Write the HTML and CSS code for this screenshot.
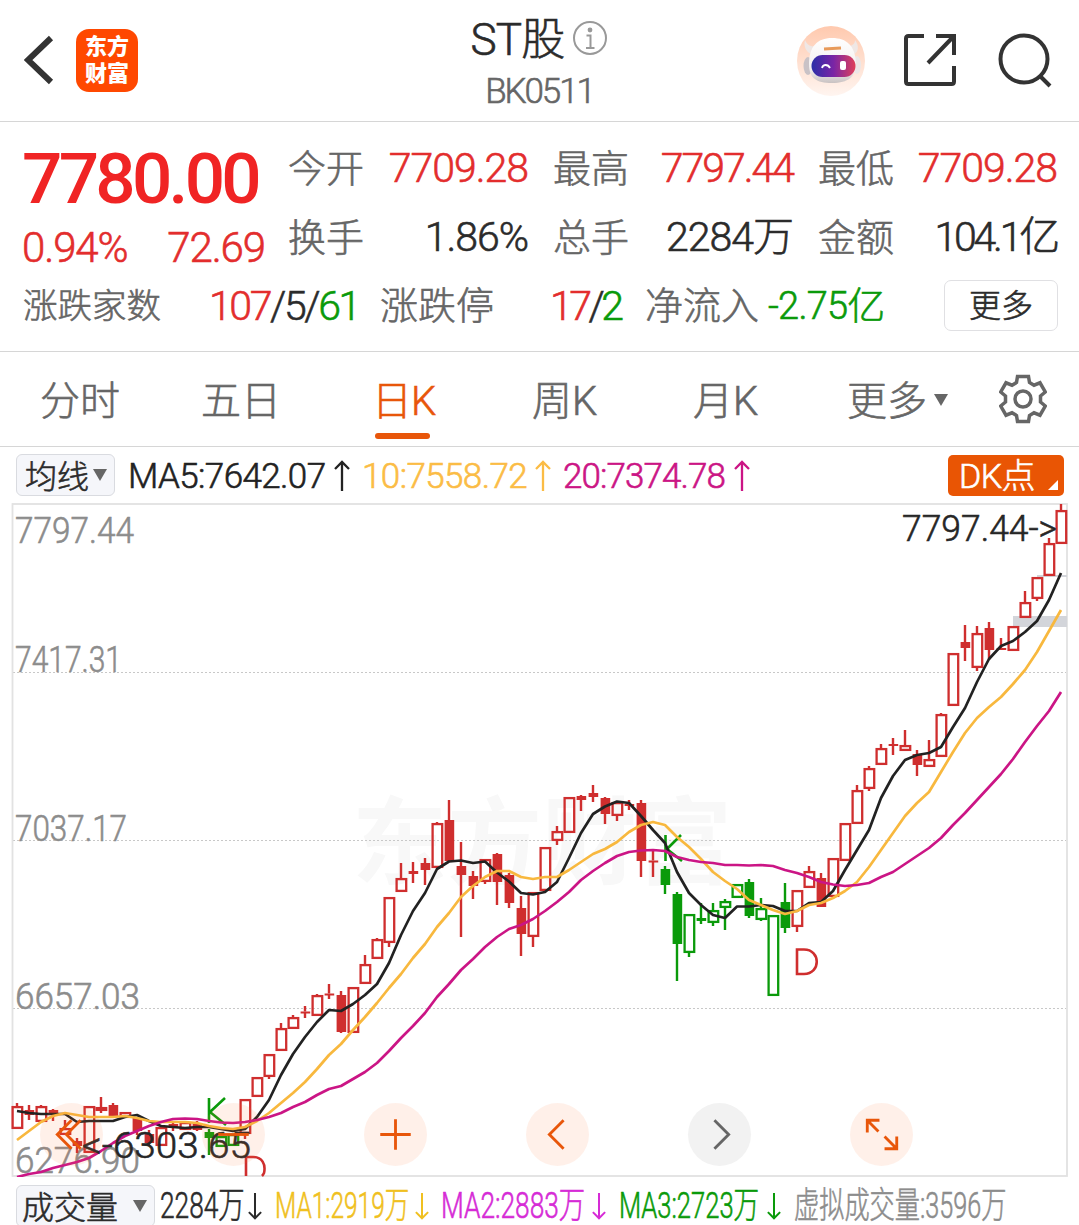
FILE: index.html
```html
<!DOCTYPE html>
<html lang="zh-CN">
<head>
  <meta charset="UTF-8" />
  <meta name="viewport" content="width=device-width, initial-scale=1.0"/>
  <title>ST股 BK0511</title>
  <link rel="stylesheet" href="styles.css">
</head>
<body>

  <header class="topbar">
    <div class="topbar-left">
      <svg class="back" viewBox="0 0 32 52"><path d="M27 4L4 26l23 22"/></svg>
      <div class="logo"><span>东方</span><span>财富</span></div>
    </div>
    <div class="topbar-title">
      <h1>ST股
        <svg class="info" viewBox="0 0 36 36"><circle cx="18" cy="18" r="16"/><circle class="dot" cx="18" cy="10" r="2.4"/><path d="M14.500 15.500h4v12M14 28h8.500"/></svg>
      </h1>
      <p>BK0511</p>
    </div>
    <div class="topbar-right">
      <svg class="robot" viewBox="0 0 68 70">
        <defs>
          <linearGradient id="peach" x1="0" y1="0" x2="0" y2="1"><stop offset="0" stop-color="#ffc9ae"/><stop offset="1" stop-color="#fff5f0"/></linearGradient>
          <linearGradient id="visor"><stop offset="0" stop-color="#2b2fa8"/><stop offset=".5" stop-color="#7a25a5"/><stop offset="1" stop-color="#e0405a"/></linearGradient>
          <linearGradient id="shell" x1="0" y1="0" x2="0" y2="1"><stop offset="0" stop-color="#fff"/><stop offset=".7" stop-color="#f3efef"/><stop offset="1" stop-color="#c9c2c2"/></linearGradient>
        </defs>
        <ellipse cx="34" cy="35" rx="34" ry="35" fill="url(#peach)"/>
        <path d="M8 14c-2 7 2 13 7 14l5-7c-6 0-10-2-12-7zM58 14c4 5 4 12-1 14l-6-8c4 0 7-2 7-6z" fill="#efe7e5"/>
        <ellipse cx="11" cy="40" rx="4.500" ry="9" fill="#c9c2c6"/>
        <ellipse cx="60" cy="39" rx="4" ry="9" fill="#ece6e6"/>
        <path d="M35 12c15 0 23 8 24 25 0 14-8 20-24 20s-23-5-23-19c0-17 8-26 23-26z" fill="url(#shell)"/>
        <rect x="14.500" y="29" width="44" height="22" rx="11" fill="url(#visor)"/>
        <path d="M27 23l17-1" stroke="#e89a5a" stroke-width="3"/>
        <path d="M25 42c1-4 6-4 8 0" fill="none" stroke="#fff" stroke-width="1.800"/>
        <rect x="43" y="35" width="6" height="9" rx="2" fill="#fff"/>
      </svg>
      <svg class="share" viewBox="0 0 56 56"><path d="M22 4H6.500Q4 4 4 6.500V49.500Q4 52 6.500 52H49.500Q52 52 52 49.500V34M34 4H52V23M52 4L26 31"/></svg>
      <svg class="search" viewBox="0 0 56 56"><circle cx="26" cy="26" r="23.500"/><path d="M42 43L52 53"/></svg>
    </div>
  </header>

  <section class="quote">
    <div class="quote-main">
      <div class="price-box">
        <div class="price">7780.00</div>
        <div class="change"><span>0.94%</span><span>72.69</span></div>
      </div>
      <dl class="stats">
        <div><dt>今开</dt><dd class="up">7709.28</dd></div>
        <div><dt>最高</dt><dd class="up tight">7797.44</dd></div>
        <div><dt>最低</dt><dd class="up">7709.28</dd></div>
        <div><dt>换手</dt><dd>1.86%</dd></div>
        <div><dt>总手</dt><dd>2284万</dd></div>
        <div><dt>金额</dt><dd class="tighter">104.1亿</dd></div>
      </dl>
    </div>
    <div class="quote-extra">
      <span class="label count">涨跌家数</span>
      <span class="value count-value"><b class="up">107</b>/5/<b class="down">61</b></span>
      <span class="label">涨跌停</span>
      <span class="value limit-value"><b class="up">17</b>/<b class="down">2</b></span>
      <span class="label">净流入</span>
      <span class="value flow down">-2.75亿</span>
      <button class="more">更多</button>
    </div>
  </section>

  <nav class="tabs">
    <a>分时</a>
    <a>五日</a>
    <a class="active">日K</a>
    <a>周K</a>
    <a>月K</a>
    <a>更多<i class="caret"></i></a>
    <svg class="gear" viewBox="0 0 48 50"><path d="M18.500 2.500H29.500L30.500 8.500L35 11.200L41 8.800L46.300 18L41.500 22V28L46.300 32L41 41.200L35 38.800L30.500 41.500L29.500 47.500H18.500L17.500 41.500L13 38.800L7 41.200L1.700 32L6.500 28V22L1.700 18L7 8.800L13 11.200L17.500 8.500Z"/><circle cx="24" cy="25" r="8"/></svg>
  </nav>

  <div class="ma-row">
    <div class="picker">均线<i class="caret"></i></div>
    <span class="ma5">MA5:7642.07</span><svg class="arrow ma5" viewBox="0 0 16 32"><path d="M8 31V2M1 9l7-7 7 7"/></svg>
    <span class="ma10">10:7558.72</span><svg class="arrow ma10" viewBox="0 0 16 32"><path d="M8 31V2M1 9l7-7 7 7"/></svg>
    <span class="ma20">20:7374.78</span><svg class="arrow ma20" viewBox="0 0 16 32"><path d="M8 31V2M1 9l7-7 7 7"/></svg>
    <div class="dk">DK点</div>
  </div>

  <main class="chart">
    <svg id="kline" viewBox="0 503 1079 674" width="1079" height="674"></svg>
    <div class="tools">
      <button><svg viewBox="0 0 62 62"><path d="M31 17L17 31l14 14M40 17L26 31l14 14"/></svg></button>
      <button><svg viewBox="0 0 62 62"><path d="M16 31h30"/></svg></button>
      <button><svg viewBox="0 0 62 62"><path d="M16 31h30M31 16v30"/></svg></button>
      <button><svg viewBox="0 0 62 62"><path d="M37 17L23 31l14 14"/></svg></button>
      <button class="off"><svg viewBox="0 0 62 62"><path d="M26 17l14 14-14 14"/></svg></button>
      <button><svg viewBox="0 0 62 62"><path d="M17 29V17H29M17 17l11 11M46 33V45H34M46 45L34 33"/></svg></button>
    </div>
  </main>

  <div class="vol-row">
    <div class="picker">成交量<i class="caret"></i></div>
    <div class="vol v0"><span>2284万</span><svg class="arrow" viewBox="0 0 16 32"><path d="M8 1v29M1 23l7 7 7-7"/></svg></div>
    <div class="vol v1"><span>MA1:2919万</span><svg class="arrow" viewBox="0 0 16 32"><path d="M8 1v29M1 23l7 7 7-7"/></svg></div>
    <div class="vol v2"><span>MA2:2883万</span><svg class="arrow" viewBox="0 0 16 32"><path d="M8 1v29M1 23l7 7 7-7"/></svg></div>
    <div class="vol v3"><span>MA3:2723万</span><svg class="arrow" viewBox="0 0 16 32"><path d="M8 1v29M1 23l7 7 7-7"/></svg></div>
    <div class="vol v4"><span>虚拟成交量:3596万</span></div>
  </div>

  <script src="chart.js"></script>
</body>
</html>
```
FILE: styles.css
```css
* {
  margin: 0;
  padding: 0;
  box-sizing: border-box;
}

body {
  width: 1079px;
  height: 1225px;
  overflow: hidden;
  background-color: #ffffff;
  color: #2b2b2b;
  font-family: Roboto, "Noto Sans CJK SC", sans-serif;
  font-weight: 300;
  line-height: 1.2;
  -webkit-text-stroke: 0.6px currentColor;
}

svg {
  display: block;
  fill: none;
}

button {
  font: inherit;
  color: inherit;
  border: none;
}

.up { color: #e32d2d; }
.down { color: #0a9a0a; }

/* top bar */
.topbar {
  height: 122px;
  border-bottom: 1px solid #d6d6d6;
  display: grid;
  grid-template-columns: 1fr 300px 1fr;
}

.topbar-left {
  display: flex;
  align-items: flex-start;
  padding: 29px 0 0 24px;
}

.back {
  width: 32px;
  height: 52px;
  margin: 5px 20px 0 0;
  stroke: #333333;
  stroke-width: 6;
}

.logo {
  width: 62px;
  height: 63px;
  padding-top: 4px;
  border-radius: 13px;
  background-color: #ff4800;
  color: #ffffff;
  font-size: 22px;
  font-weight: 900;
  line-height: 27px;
  -webkit-text-stroke: 0;
  display: flex;
  flex-direction: column;
  align-items: center;
}

.topbar-title {
  padding-top: 13px;
  text-align: center;
}

.topbar-title h1 {
  display: flex;
  justify-content: center;
  align-items: center;
  gap: 8px;
  height: 54px;
  font-size: 44px;
  font-weight: 300;
  letter-spacing: -0.8px;
}

.topbar-title p {
  height: 50px;
  line-height: 50px;
  font-size: 35px;
  letter-spacing: -2.1px;
  color: #666666;
}

.info {
  width: 36px;
  height: 36px;
  margin-top: -5px;
  stroke: #999999;
  stroke-width: 2;
}

.info .dot {
  fill: #999999;
  stroke: none;
}

.topbar-right {
  display: flex;
  justify-content: flex-end;
  padding: 26px 25px 0 0;
}

.robot {
  width: 68px;
  height: 70px;
}

.share {
  width: 56px;
  height: 56px;
  margin: 6px 40px 0 37px;
  stroke: #333333;
  stroke-width: 4;
}

.search {
  width: 56px;
  height: 56px;
  margin-top: 7px;
  stroke: #333333;
  stroke-width: 4;
}

/* quote */
.quote {
  height: 230px;
  border-bottom: 1px solid #d6d6d6;
}

.quote-main {
  display: flex;
  height: 150px;
}

.price-box {
  width: 288px;
  padding: 17px 23px 0 22px;
  color: #e32d2d;
}

.price {
  height: 80px;
  line-height: 80px;
  color: #f02424;
  font-size: 71px;
  font-weight: 500;
  letter-spacing: -3.7px;
  -webkit-text-stroke: 0;
}

.change {
  display: flex;
  justify-content: space-between;
  line-height: 58px;
  font-size: 42px;
  letter-spacing: -1.1px;
}

.stats {
  flex: 1;
  display: grid;
  grid-template-columns: 240px 240px 239px;
  grid-template-rows: 69px 69px;
  column-gap: 25px;
  padding-top: 12px;
}

.stats div {
  display: flex;
  justify-content: space-between;
  align-items: center;
}

.stats dt,
.label {
  font-size: 38px;
  color: #666666;
  padding-top: 2px;
}

.stats dd,
.value {
  font-size: 41px;
  letter-spacing: -1px;
}

.stats .tight { letter-spacing: -2px; }
.stats .tighter { letter-spacing: -3.2px; }

.quote-extra {
  display: flex;
  align-items: center;
  height: 66px;
  padding-left: 23px;
}

.quote-extra b {
  font-weight: inherit;
}

.quote-extra .value {
  padding-top: 3px;
}

.quote-extra .label {
  padding-top: 4px;
}

.quote-extra .count {
  width: 186px;
  font-size: 34.500px;
}

.quote-extra .count-value {
  width: 171px;
  letter-spacing: -2.4px;
}

.quote-extra .limit-value {
  width: 95px;
  margin-left: 56px;
  letter-spacing: -3.5px;
}

.quote-extra .flow {
  width: 176px;
  margin-left: 9px;
  font-size: 38px;
  letter-spacing: -0.8px;
}

.more {
  flex: none;
  width: 114px;
  height: 51px;
  padding-top: 2px;
  border: 1.500px solid #e0e0e3;
  border-radius: 7px;
  background-color: #ffffff;
  font-size: 32px;
}

/* tabs */
.tabs {
  height: 95px;
  border-bottom: 1px solid #d6d6d6;
  display: grid;
  grid-template-columns: 161px 171px 160px 161px 154px 192px 1fr;
  align-items: center;
  padding-left: 40px;
  font-size: 40px;
  color: #666666;
}

.tabs a {
  height: 94px;
  line-height: 99px;
}

.tabs .active {
  color: #e8560a;
  position: relative;
  letter-spacing: -1px;
}

.tabs .active::after {
  content: "";
  position: absolute;
  left: 3px;
  bottom: 7px;
  width: 55px;
  height: 6px;
  border-radius: 3px;
  background-color: #e8560a;
}

.caret {
  display: inline-block;
  border: 7px solid transparent;
  border-top: 12px solid #666666;
  border-bottom: none;
  vertical-align: 9px;
  margin-left: 7px;
}

.gear {
  width: 48px;
  height: 50px;
  margin-left: -40px;
  stroke: #666666;
  stroke-width: 3.500;
}

/* moving averages */
.ma-row {
  height: 56px;
  display: flex;
  align-items: center;
  padding-left: 16px;
  font-size: 35px;
  letter-spacing: -0.6px;
}

.ma-row span {
  padding-top: 4px;
}

.picker {
  height: 42px;
  border: 1px solid #d9dbe0;
  border-radius: 6px;
  background-color: #f5f6fa;
  line-height: 44px;
  font-size: 32px;
  letter-spacing: 0;
  padding-left: 8px;
  white-space: nowrap;
}

.picker .caret {
  vertical-align: 7px;
}

.ma-row .picker {
  width: 99px;
  margin-right: 13px;
}

.ma-row .caret {
  margin-left: 4px;
}

.ma5 { color: #222222; width: 206px; }
.ma10 { color: #fbbc45; width: 173px; }
.ma20 { color: #cb1585; width: 171px; }

.ma-row span.ma20 {
  letter-spacing: -0.9px;
}

.arrow {
  flex: none;
  width: 16px;
  height: 32px;
  stroke: currentColor;
  stroke-width: 2.300;
}

.ma-row .arrow {
  width: 16px;
  margin-top: 2px;
  margin-right: 12px;
}

.dk {
  position: relative;
  width: 116px;
  height: 41px;
  margin-left: auto;
  margin-right: 15px;
  padding-left: 11px;
  border-radius: 5px;
  background-color: #e95504;
  color: #ffffff;
  font-size: 34px;
  line-height: 43px;
}

.dk::after {
  content: "";
  position: absolute;
  right: 6px;
  bottom: 6px;
  border-left: 10px solid transparent;
  border-bottom: 10px solid #ffffff;
}

/* chart */
.chart {
  position: relative;
  height: 674px;
}

.chart text {
  font-size: 37px;
  stroke-width: 0.6px;
}

.chart .watermark {
  font-size: 95px;
  font-weight: 700;
  fill: #f8f8f8;
  -webkit-text-stroke: 0;
}

.chart .axis { fill: #8c8c8c; stroke: #8c8c8c; }
.chart .mark { fill: #262626; stroke: #262626; }

.tools {
  position: absolute;
  left: 40px;
  top: 600px;
  display: flex;
  gap: 99px;
}

.tools button {
  width: 63px;
  height: 63px;
  border-radius: 50%;
  background-color: rgba(255, 122, 51, 0.11);
}

.tools svg {
  stroke: #e8560a;
  stroke-width: 2.800;
}

.tools .off { background-color: #f2f2f2; }
.tools .off svg { stroke: #666666; }

/* volume */
.vol-row {
  display: flex;
  align-items: flex-start;
  padding: 8px 0 0 16px;
  height: 48px;
}

.vol-row .picker {
  width: 139px;
  margin-right: 5px;
  padding-left: 5px;
}

.vol-row .caret {
  margin-left: 15px;
}

.vol {
  display: flex;
  flex: none;
  align-items: center;
  height: 40px;
  font-size: 36px;
  line-height: 38px;
  white-space: nowrap;
}

.vol span {
  flex: none;
  padding-top: 2px;
  transform: scaleX(0.7);
  transform-origin: left;
}

.vol-row .arrow {
  width: 14px;
  margin-top: 2px;
}

.v0 { width: 115px; }
.v0 span { width: 88px; transform: scaleX(0.73); }
.v1 { width: 166px; color: #f0c020; }
.v1 span { width: 140px; transform: scaleX(0.68); }
.v2 { width: 178px; color: #d62bd6; }
.v2 span { width: 151px; transform: scaleX(0.73); }
.v3 { width: 175px; color: #0a9a0a; }
.v3 span { width: 148px; transform: scaleX(0.71); }
.v4 { width: 220px; color: #8c8c8c; }
```
FILE: chart.js
```javascript
const RED = "#cf2e2e";
const GREEN = "#0a9a0a";
const STEP = 12;
const LEFT = 17;

// [type, high, top, bottom, low]  h = hollow, s = solid, g prefix = green
const candles = [
  ["h", 1103, 1106, 1129, 1129], ["s", 1105, 1110, 1115, 1120], ["h", 1105, 1106, 1122, 1122], ["s", 1109, 1110, 1113, 1121],
  ["h", 1120, 1128, 1135, 1135], ["s", 1138, 1141, 1146, 1153], ["h", 1106, 1106, 1153, 1153], ["h", 1097, 1107, 1111, 1113],
  ["s", 1103, 1105, 1116, 1116], ["h", 1112, 1112, 1118, 1118], ["s", 1118, 1118, 1131, 1135], ["s", 1130, 1134, 1143, 1146],
  ["h", 1127, 1127, 1146, 1146], ["s", 1122, 1124, 1128, 1131], ["h", 1122, 1122, 1130, 1130], ["s", 1121, 1123, 1130, 1131],
  ["gs", 1129, 1132, 1138, 1155], ["gh", 1136, 1136, 1147, 1147], ["gh", 1134, 1134, 1146, 1146], ["h", 1099, 1099, 1134, 1139],
  ["h", 1077, 1077, 1097, 1097], ["h", 1054, 1054, 1077, 1079], ["h", 1023, 1028, 1051, 1051], ["h", 1015, 1017, 1029, 1029],
  ["s", 1006, 1011.5, 1013, 1018], ["h", 994, 995, 1016, 1016], ["s", 984, 993.5, 995, 999], ["s", 991, 995, 1032, 1033],
  ["h", 987, 987, 1033, 1033], ["h", 955, 964, 984, 984], ["h", 938, 939, 959, 959], ["h", 897, 897, 943, 947],
  ["h", 863, 878, 892, 892], ["s", 862, 871, 874, 883], ["s", 858, 863, 870, 885], ["h", 822, 823, 868, 868],
  ["s", 800, 820, 861, 861], ["s", 842, 866, 875, 937], ["s", 871, 876, 886, 899], ["h", 859, 859, 882, 884],
  ["s", 853, 854, 882, 905], ["s", 873, 875, 903, 908], ["s", 896, 908, 934, 956], ["h", 892, 892, 937, 947],
  ["h", 847, 847, 891, 891], ["h", 826, 831, 841, 845], ["h", 797, 797, 833, 833], ["s", 795, 796, 800, 811],
  ["s", 785, 793, 797, 802], ["s", 797, 798, 814, 824], ["h", 802, 802, 816, 821], ["s", 800, 804, 806, 810],
  ["s", 800, 803, 861, 877], ["s", 851, 860.5, 862, 877], ["gs", 866, 869, 885, 894], ["gs", 892, 894, 944, 981],
  ["gh", 914, 914, 953, 957], ["gs", 903, 918, 921, 924], ["gh", 903, 910, 923, 926], ["gh", 899, 901, 908, 930],
  ["gh", 884, 884, 898, 898], ["gs", 879, 882, 916, 918], ["gh", 898, 908, 920, 921], ["gh", 915, 915, 996, 996],
  ["gs", 883, 902, 928, 933], ["h", 890, 890, 927, 932], ["h", 866, 871, 888, 888], ["s", 873, 878, 907, 907],
  ["h", 858, 858, 897, 897], ["h", 823, 823, 861, 861], ["h", 785, 790, 824, 824], ["h", 766, 768, 789, 791],
  ["h", 744, 748, 765, 765], ["s", 738, 744, 746, 755], ["h", 730, 745, 751, 751], ["s", 750, 754, 765, 776],
  ["h", 740, 759, 767, 767], ["h", 713, 714, 757, 757], ["h", 653, 653, 706, 706], ["s", 625, 642, 648, 661],
  ["h", 626, 633, 668, 671], ["s", 622, 628, 650, 660], ["s", 638, 648, 650, 650], ["h", 626, 626, 651, 651],
  ["h", 591, 602, 618, 618], ["h", 577, 577, 599, 601], ["h", 538, 543, 576, 576], ["h", 504, 510, 544, 544]
];

const ma5 = [
  1111, 1113, 1114, 1114, 1114, 1122, 1121, 1121, 1121, 1117, 1115, 1121, 1126, 1127, 1128, 1127, 1127, 1129, 1131, 1129,
  1117, 1100, 1075, 1054, 1037, 1022, 1010, 1011, 1004, 995, 984, 963, 935, 911, 893, 869, 861.5, 860.5, 863, 861.5,
  872.5, 881.5, 893, 894.5, 892, 882, 858, 833, 814, 806.5, 801.5, 803, 816, 830, 843, 872, 893, 905, 915, 918,
  906.5, 906.5, 905, 906, 911, 911, 903, 902, 891, 870, 850, 830, 798, 776, 760, 755, 753, 747, 727, 708,
  682, 659, 646, 641, 632, 621, 600, 573
];

const ma10 = [
  1140, 1131, 1122, 1116, 1113, 1115, 1117, 1117, 1117, 1116, 1118, 1121, 1122, 1122, 1122, 1123, 1126, 1128, 1129, 1127,
  1121, 1113, 1103, 1093, 1082, 1069, 1055, 1044, 1030, 1017, 1003, 988, 974, 958, 944, 927, 913, 897, 886, 877,
  871, 871, 877, 879, 877, 877, 870, 862, 854, 849, 842, 832, 825, 822, 825, 837, 847, 859, 872, 881,
  889, 900, 905, 910, 914, 911, 905, 903, 898, 891, 882, 867, 850, 833, 816, 803, 792, 772, 752, 733,
  718, 707, 697, 684, 670, 652, 631, 610
];

const ma20 = [
  1177, 1174, 1172, 1168, 1165, 1162, 1158, 1151, 1143, 1136, 1131, 1126, 1122, 1119, 1118.5, 1119, 1121, 1122.5, 1123, 1122,
  1120, 1117, 1113, 1107, 1102, 1095, 1089, 1086, 1079, 1072, 1063, 1051, 1038, 1026, 1013, 997, 984, 970, 959, 947,
  937, 929, 925, 919, 911, 902, 892, 880, 871, 863, 856, 852, 850.5, 850, 851, 857, 860, 862, 863, 865,
  865, 865.5, 865, 866, 870, 873, 877, 882, 884.5, 886, 885, 883, 877, 872, 864, 856, 848, 838, 825, 813,
  800, 787, 774, 759, 742, 726, 711, 692
];

function drawCandle([type, high, top, bottom, low], i) {
  const color = type[0] === "g" ? GREEN : RED;
  const x = LEFT + i * STEP;
  const wick = `<path d="M${x} ${high}V${top}M${x} ${bottom}V${low}" stroke="${color}" stroke-width="2.4"/>`;
  if (type.endsWith("h")) {
    return wick + `<rect x="${x - 4.4}" y="${top + 1.1}" width="9.6" height="${Math.max(bottom - top - 2.2, 1)}" stroke="${color}" stroke-width="2.3"/>`;
  }
  // a flat body still needs the full bar width and its wick through it
  const bar = `<rect x="${x - 4.4}" y="${top}" width="9.6" height="${Math.max(bottom - top, 2)}" fill="${color}"/>`;
  return wick + bar;
}

function drawLine(values, color) {
  const points = values.map((y, i) => `${LEFT + i * STEP},${y}`).join(" ");
  return `<polyline points="${points}" stroke="${color}" stroke-width="2.7" stroke-linejoin="round"/>`;
}

function drawText(x, y, width, text, cls) {
  return `<text x="${x}" y="${y}" textLength="${width}" lengthAdjust="spacingAndGlyphs" class="${cls}">${text}</text>`;
}

const grid = [672, 840, 1008]
  .map(y => `<path d="M13 ${y}.5H1066" stroke="#c8c8c8" stroke-dasharray="2 2"/>`).join("");

document.getElementById("kline").innerHTML =
  drawText(352, 877, 380, "东方财富", "watermark") +
  grid +
  `<rect x="12.500" y="504" width="1054.500" height="672" stroke="#e2e2e2" stroke-width="1.800"/>` +
  `<rect x="1013" y="616" width="54" height="11" fill="#d3d5da"/>` +
  `<path d="M1037 576H1067" stroke="#d3d5da" stroke-width="2"/>` +
  drawText(15, 543, 119, "7797.44", "axis") +
  drawText(15, 672, 107, "7417.31", "axis") +
  drawText(15, 841, 112, "7037.17", "axis") +
  drawText(15, 1009, 125, "6657.03", "axis") +
  drawText(15, 1173, 125, "6276.90", "axis") +
  candles.map(drawCandle).join("") +
  `<g stroke-width="2.600"><path d="M665.500 835v26M681 835l-14 14 15 12M209 1098v25M225 1098l-15 14 16 13" stroke="${GREEN}"/>` +
  `<path d="M797 949.500v24.500h7c17 0 17-24.500 0-24.500zM246 1176v-19h7c9 0 13 7 11 16q-1 2-2 3" stroke="${RED}"/></g>` +
  drawLine(ma5, "#222222") +
  drawLine(ma10, "#f8b83e") +
  drawLine(ma20, "#cb1585") +
  drawText(902, 541, 155, "7797.44-&gt;", "mark") +
  drawText(82, 1158, 169, "&lt;-6303.65", "mark");
```
